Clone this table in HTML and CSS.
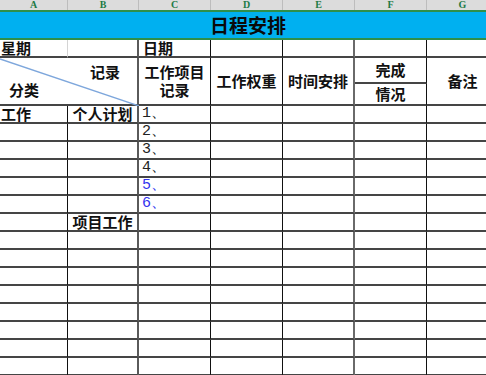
FILE: index.html
```html
<!DOCTYPE html>
<html>
<head>
<meta charset="utf-8">
<link rel="stylesheet" href="styles.css">
</head>
<body>
<div class="sheet">
  <div class="colhead">
    <div class="ch">A</div><div class="ch">B</div><div class="ch">C</div><div class="ch">D</div><div class="ch">E</div><div class="ch">F</div><div class="ch">G</div>
  </div>
  <div class="title"><span>日程安排</span></div>
  <div class="grid">
    <div class="c ca soft left">星期</div><div class="c cb"></div><div class="c cc left pad">日期</div><div class="c cd"></div><div class="c ce"></div><div class="c cf"></div><div class="c cg"></div>

    <div class="c cb diag">
      <svg class="diagline" viewBox="0 0 100 100" preserveAspectRatio="none"><line x1="0" y1="2" x2="100" y2="100" stroke="#7ea7dc" stroke-width="1.3" vector-effect="non-scaling-stroke"/></svg>
      <span class="rec">记录</span>
      <span class="cat">分类</span>
    </div>
    <div class="c cc span2 center"><span class="two">工作项目<br>记录</span></div>
    <div class="c cd span2 center">工作权重</div>
    <div class="c ce span2 center">时间安排</div>
    <div class="c cf center">完成</div>
    <div class="c cg span2 center">备注</div>
    <div class="c cf center">情况</div>

    <div class="c ca left">工作</div><div class="c cb center">个人计划</div><div class="c cc num">1、</div><div class="c cd"></div><div class="c ce"></div><div class="c cf"></div><div class="c cg"></div>
    <div class="c ca"></div><div class="c cb"></div><div class="c cc num">2、</div><div class="c cd"></div><div class="c ce"></div><div class="c cf"></div><div class="c cg"></div>
    <div class="c ca"></div><div class="c cb"></div><div class="c cc num">3、</div><div class="c cd"></div><div class="c ce"></div><div class="c cf"></div><div class="c cg"></div>
    <div class="c ca"></div><div class="c cb"></div><div class="c cc num">4、</div><div class="c cd"></div><div class="c ce"></div><div class="c cf"></div><div class="c cg"></div>
    <div class="c ca"></div><div class="c cb"></div><div class="c cc num blue">5、</div><div class="c cd"></div><div class="c ce"></div><div class="c cf"></div><div class="c cg"></div>
    <div class="c ca"></div><div class="c cb"></div><div class="c cc num blue">6、</div><div class="c cd"></div><div class="c ce"></div><div class="c cf"></div><div class="c cg"></div>
    <div class="c ca"></div><div class="c cb center">项目工作</div><div class="c cc"></div><div class="c cd"></div><div class="c ce"></div><div class="c cf"></div><div class="c cg"></div>
    <div class="c ca"></div><div class="c cb"></div><div class="c cc"></div><div class="c cd"></div><div class="c ce"></div><div class="c cf"></div><div class="c cg"></div>
    <div class="c ca"></div><div class="c cb"></div><div class="c cc"></div><div class="c cd"></div><div class="c ce"></div><div class="c cf"></div><div class="c cg"></div>
    <div class="c ca"></div><div class="c cb"></div><div class="c cc"></div><div class="c cd"></div><div class="c ce"></div><div class="c cf"></div><div class="c cg"></div>
    <div class="c ca"></div><div class="c cb"></div><div class="c cc"></div><div class="c cd"></div><div class="c ce"></div><div class="c cf"></div><div class="c cg"></div>
    <div class="c ca"></div><div class="c cb"></div><div class="c cc"></div><div class="c cd"></div><div class="c ce"></div><div class="c cf"></div><div class="c cg"></div>
    <div class="c ca"></div><div class="c cb"></div><div class="c cc"></div><div class="c cd"></div><div class="c ce"></div><div class="c cf"></div><div class="c cg"></div>
    <div class="c ca"></div><div class="c cb"></div><div class="c cc"></div><div class="c cd"></div><div class="c ce"></div><div class="c cf"></div><div class="c cg"></div>
    <div class="c ca"></div><div class="c cb"></div><div class="c cc"></div><div class="c cd"></div><div class="c ce"></div><div class="c cf"></div><div class="c cg"></div>
    <div class="c ca"></div><div class="c cb"></div><div class="c cc"></div><div class="c cd"></div><div class="c ce"></div><div class="c cf"></div><div class="c cg"></div>
  </div>
</div>
</body>
</html>
```
FILE: styles.css
```css
html, body {
  margin: 0;
  padding: 0;
  background: #fff;
}
body {
  width: 486px;
  height: 375px;
  overflow: hidden;
}
.sheet {
  width: 486px;
  height: 375px;
  overflow: hidden;
  font-family: "Noto Sans CJK SC", "Noto Sans", sans-serif;
  color: #111;
}
.colhead {
  display: grid;
  grid-template-columns: 68px 71px 72px 72px 72px 72px 72px;
  height: 10px;
  background: #dcdcdc;
  border-bottom: 2px solid #2f8f4a;
  width: 499px;
}
.ch {
  box-sizing: border-box;
  border-right: 1px solid #bdbdbd;
  font-family: "Liberation Serif", serif;
  font-weight: bold;
  font-size: 10px;
  line-height: 10px;
  height: 10px;
  color: #217a45;
  text-align: center;
}
.title {
  height: 26px;
  background: #00b0f0;
  border-bottom: 2px solid #2f8f4a;
  display: flex;
  align-items: center;
  justify-content: center;
  padding-left: 10px;
}
.title span {
  font-size: 19px;
  font-weight: bold;
  color: #0a0a0a;
  line-height: 26px;
}
.grid {
  display: grid;
  grid-template-columns: 68px 71px 72px 72px 72px 72px 72px;
  grid-template-rows: 18px 26px 22px;
  grid-auto-rows: 18px;
  width: 499px;
}
.c {
  box-sizing: border-box;
  border-bottom: 2px solid #454545;
  font-size: 15px;
  font-weight: bold;
  line-height: 16px;
  display: flex;
  align-items: center;
  white-space: nowrap;
}
.ca { border-right: 1px solid #111; }
.cb { border-right: 2px solid #5a5a5a; }
.cc { border-right: 1px solid #111; }
.cd { border-right: 1px solid #111; }
.ce { border-right: 2px solid #6a6a6a; }
.cf { border-right: 1px solid #111; }
.cg { border-right: 1px solid #111; }
.soft { border-right: 1px solid #d4d4d4; }
.left { padding-left: 1px; }
.pad { padding-left: 4px; }
.center { justify-content: center; }
.span2 { grid-row: span 2; }
.diag {
  grid-column: span 2;
  grid-row: span 2;
  position: relative;
}
.diagline {
  position: absolute;
  left: 0;
  top: 0;
  width: 139px;
  height: 48px;
}
.rec {
  position: absolute;
  left: 90px;
  top: 6px;
}
.cat {
  position: absolute;
  left: 9px;
  top: 24px;
}
.two {
  display: block;
  text-align: center;
  line-height: 18px;
}
.num {
  font-family: "Liberation Mono", monospace;
  font-weight: normal;
  font-size: 15px;
  color: #222;
  padding-left: 3px;
}
.blue { color: #3333ee; }
```
